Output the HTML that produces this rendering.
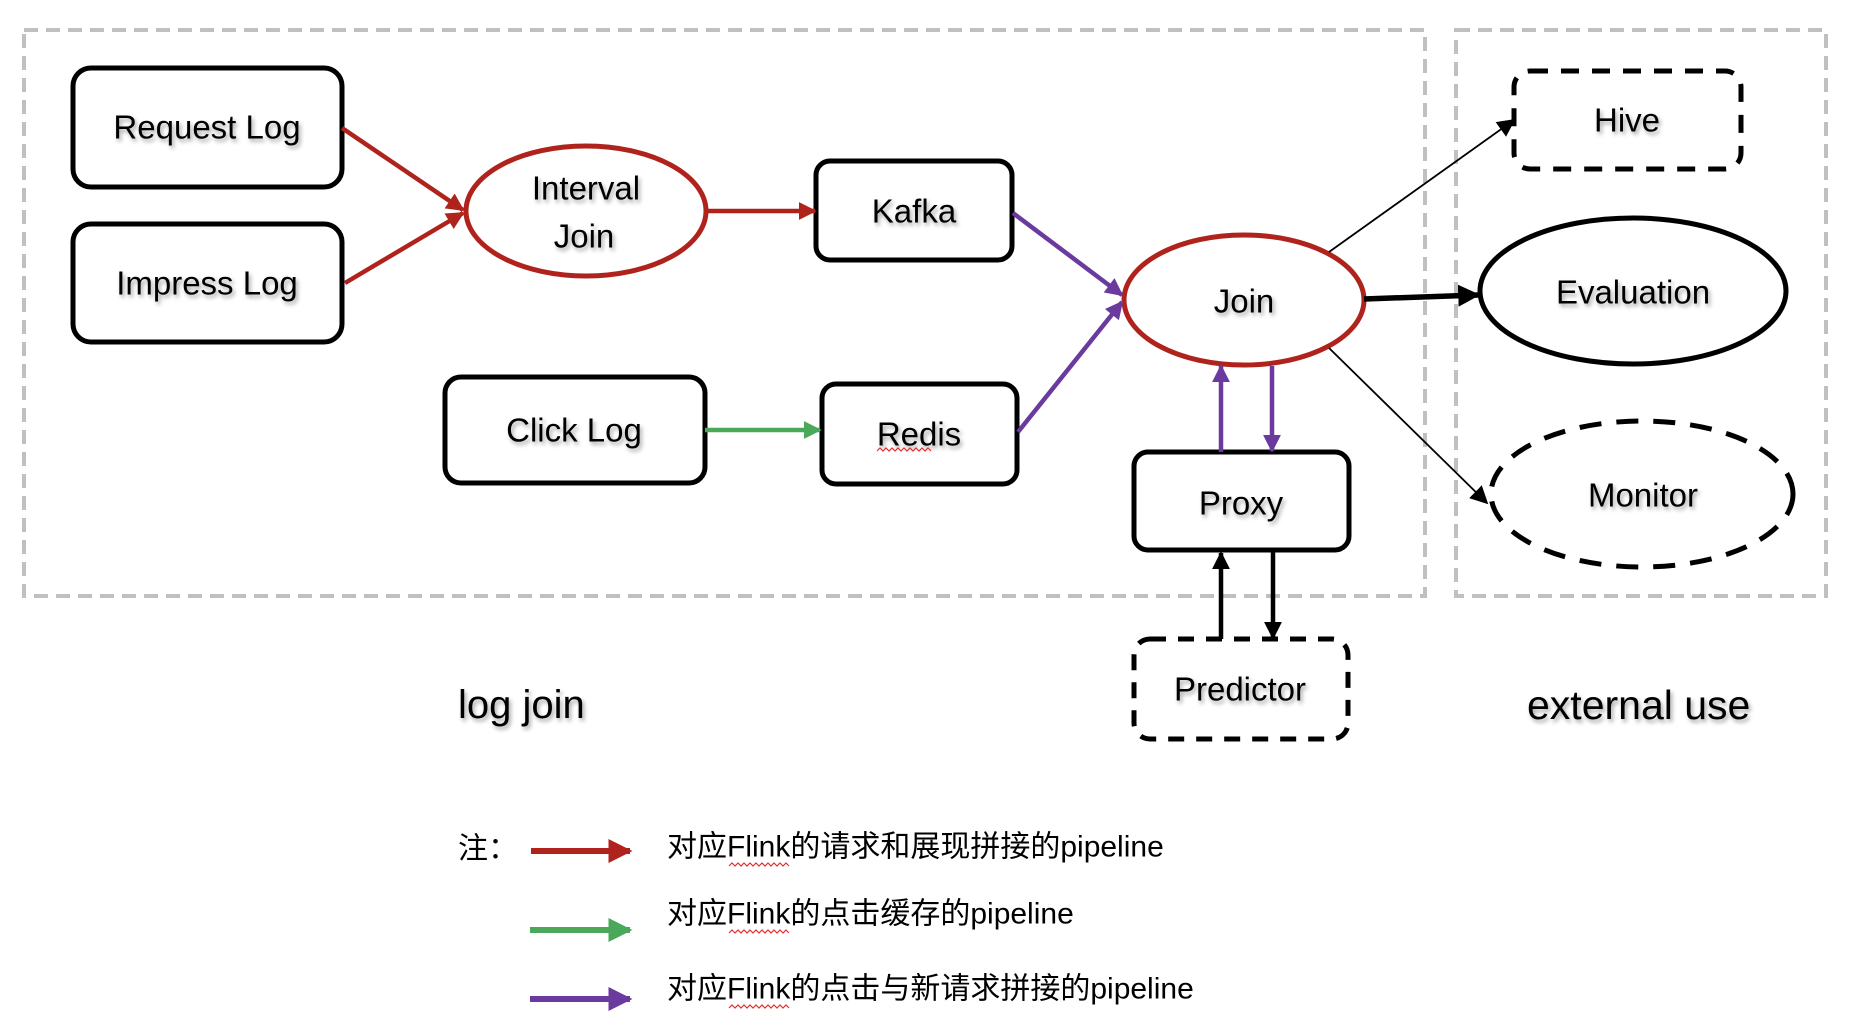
<!DOCTYPE html>
<html><head><meta charset="utf-8"><style>
html,body{margin:0;padding:0;background:#fff;}
svg{display:block;}
text{font-family:"Liberation Sans","Noto Sans CJK SC",sans-serif;}
.t{font-size:33px;fill:#000;text-anchor:middle;dominant-baseline:central;filter:url(#sh);}
.lg{font-size:30px;fill:#000;dominant-baseline:central;}
</style></head><body>
<svg width="1852" height="1036" viewBox="0 0 1852 1036" xmlns="http://www.w3.org/2000/svg">
<defs>
<filter id="sh" x="-20%" y="-20%" width="140%" height="160%"><feDropShadow dx="2" dy="3" stdDeviation="2" flood-color="#000" flood-opacity="0.35"/></filter>
<marker id="ar" viewBox="0 0 10 10" refX="9" refY="5" markerWidth="4" markerHeight="4" orient="auto"><path d="M0,0L10,5L0,10z" fill="#b0231c"/></marker>
<marker id="ap" viewBox="0 0 10 10" refX="9" refY="5" markerWidth="4" markerHeight="4" orient="auto"><path d="M0,0L10,5L0,10z" fill="#6a3a9e"/></marker>
<marker id="ag" viewBox="0 0 10 10" refX="9" refY="5" markerWidth="4" markerHeight="4" orient="auto"><path d="M0,0L10,5L0,10z" fill="#4aa85a"/></marker>
<marker id="ab" viewBox="0 0 10 10" refX="9" refY="5" markerWidth="4" markerHeight="4" orient="auto"><path d="M0,0L10,5L0,10z" fill="#000"/></marker>
<marker id="ab2" viewBox="0 0 10 10" refX="9" refY="5" markerWidth="10" markerHeight="10" orient="auto"><path d="M0,0L10,5L0,10z" fill="#000"/></marker>
</defs>
<rect x="24" y="30" width="1401" height="566" fill="none" stroke="#c0c0c0" stroke-width="4" stroke-dasharray="14,8"/>
<rect x="1456" y="30" width="370" height="566" fill="none" stroke="#c0c0c0" stroke-width="4" stroke-dasharray="14,8"/>
<rect x="73" y="68" width="269" height="119" rx="18" fill="#fff" stroke="#000" stroke-width="5"/>
<text class="t" x="207" y="127">Request Log</text>
<rect x="73" y="224" width="269" height="118" rx="18" fill="#fff" stroke="#000" stroke-width="5"/>
<text class="t" x="207" y="283">Impress Log</text>
<ellipse cx="586" cy="211" rx="120" ry="65" fill="#fff" stroke="#b0231c" stroke-width="5"/>
<text class="t" x="586" y="188">Interval</text>
<text class="t" x="584" y="236">Join</text>
<rect x="816" y="161" width="196" height="99" rx="14" fill="#fff" stroke="#000" stroke-width="5"/>
<text class="t" x="914" y="211">Kafka</text>
<rect x="445" y="377" width="260" height="106" rx="16" fill="#fff" stroke="#000" stroke-width="5"/>
<text class="t" x="574" y="430">Click Log</text>
<rect x="822" y="384" width="195" height="100" rx="14" fill="#fff" stroke="#000" stroke-width="5"/>
<text class="t" x="919" y="434">Redis</text>
<path d="M877,451 l3,-3 l3,3 l3,-3 l3,3 l3,-3 l3,3 l3,-3 l3,3 l3,-3 l3,3 l3,-3 l3,3 l3,-3 l3,3 l3,-3 l3,3 l3,-3 l3,3" fill="none" stroke="#e03030" stroke-width="1.2"/>
<ellipse cx="1244" cy="300" rx="120" ry="65" fill="#fff" stroke="#b0231c" stroke-width="5"/>
<text class="t" x="1244" y="301">Join</text>
<rect x="1134" y="452" width="215" height="98" rx="14" fill="#fff" stroke="#000" stroke-width="5"/>
<text class="t" x="1241" y="503">Proxy</text>
<rect x="1134" y="639" width="214" height="100" rx="16" fill="#fff" stroke="#000" stroke-width="5" stroke-dasharray="16,12"/>
<text class="t" x="1240" y="689">Predictor</text>
<rect x="1514" y="71" width="227" height="98" rx="16" fill="#fff" stroke="#000" stroke-width="5" stroke-dasharray="18,13"/>
<text class="t" x="1627" y="120">Hive</text>
<ellipse cx="1633" cy="291" rx="153" ry="73" fill="#fff" stroke="#000" stroke-width="5"/>
<text class="t" x="1633" y="292">Evaluation</text>
<ellipse cx="1642" cy="494" rx="151" ry="73" fill="#fff" stroke="#000" stroke-width="5" stroke-dasharray="22,15"/>
<text class="t" x="1643" y="495">Monitor</text>
<line x1="342" y1="128" x2="463" y2="210" stroke="#b0231c" stroke-width="4.5" marker-end="url(#ar)"/>
<line x1="345" y1="283" x2="463" y2="213" stroke="#b0231c" stroke-width="4.5" marker-end="url(#ar)"/>
<line x1="706" y1="211" x2="815" y2="211" stroke="#b0231c" stroke-width="4.5" marker-end="url(#ar)"/>
<line x1="1013" y1="213" x2="1122" y2="295" stroke="#6a3a9e" stroke-width="4.5" marker-end="url(#ap)"/>
<line x1="1018" y1="432" x2="1122" y2="302" stroke="#6a3a9e" stroke-width="4.5" marker-end="url(#ap)"/>
<line x1="705" y1="430" x2="820" y2="430" stroke="#4aa85a" stroke-width="4.5" marker-end="url(#ag)"/>
<line x1="1221" y1="452" x2="1221" y2="366" stroke="#6a3a9e" stroke-width="4.5" marker-end="url(#ap)"/>
<line x1="1272" y1="366" x2="1272" y2="451" stroke="#6a3a9e" stroke-width="4.5" marker-end="url(#ap)"/>
<line x1="1221" y1="639" x2="1221" y2="553" stroke="#000" stroke-width="4.5" marker-end="url(#ab)"/>
<line x1="1273" y1="552" x2="1273" y2="638" stroke="#000" stroke-width="4.5" marker-end="url(#ab)"/>
<line x1="1329" y1="252" x2="1514" y2="120" stroke="#000" stroke-width="1.8" marker-end="url(#ab2)"/>
<line x1="1364" y1="299" x2="1478" y2="295" stroke="#000" stroke-width="5.5" marker-end="url(#ab)"/>
<line x1="1329" y1="348" x2="1487" y2="503" stroke="#000" stroke-width="1.8" marker-end="url(#ab2)"/>
<text x="458" y="705" style="font-size:40px;filter:url(#sh)" dominant-baseline="central">log join</text>
<text x="1527" y="705" style="font-size:41px;filter:url(#sh)" dominant-baseline="central">external use</text>
<text class="lg" x="458" y="849">注：</text>
<line x1="531" y1="851" x2="630" y2="851" stroke="#b0231c" stroke-width="6" marker-end="url(#ar)"/>
<text class="lg" x="667" y="847">对应Flink的请求和展现拼接的pipeline</text>
<line x1="530" y1="930" x2="630" y2="930" stroke="#4aa85a" stroke-width="6" marker-end="url(#ag)"/>
<text class="lg" x="667" y="914">对应Flink的点击缓存的pipeline</text>
<line x1="530" y1="999" x2="630" y2="999" stroke="#6a3a9e" stroke-width="6" marker-end="url(#ap)"/>
<text class="lg" x="667" y="989">对应Flink的点击与新请求拼接的pipeline</text>
<g fill="none" stroke="#e03030" stroke-width="1.2">
<path d="M729,866 l3,-3 l3,3 l3,-3 l3,3 l3,-3 l3,3 l3,-3 l3,3 l3,-3 l3,3 l3,-3 l3,3 l3,-3 l3,3 l3,-3 l3,3 l3,-3 l3,3 l3,-3 l3,3"/>
<path d="M729,933 l3,-3 l3,3 l3,-3 l3,3 l3,-3 l3,3 l3,-3 l3,3 l3,-3 l3,3 l3,-3 l3,3 l3,-3 l3,3 l3,-3 l3,3 l3,-3 l3,3 l3,-3 l3,3"/>
<path d="M729,1008 l3,-3 l3,3 l3,-3 l3,3 l3,-3 l3,3 l3,-3 l3,3 l3,-3 l3,3 l3,-3 l3,3 l3,-3 l3,3 l3,-3 l3,3 l3,-3 l3,3 l3,-3 l3,3"/>
</g>
</svg>
</body></html>
